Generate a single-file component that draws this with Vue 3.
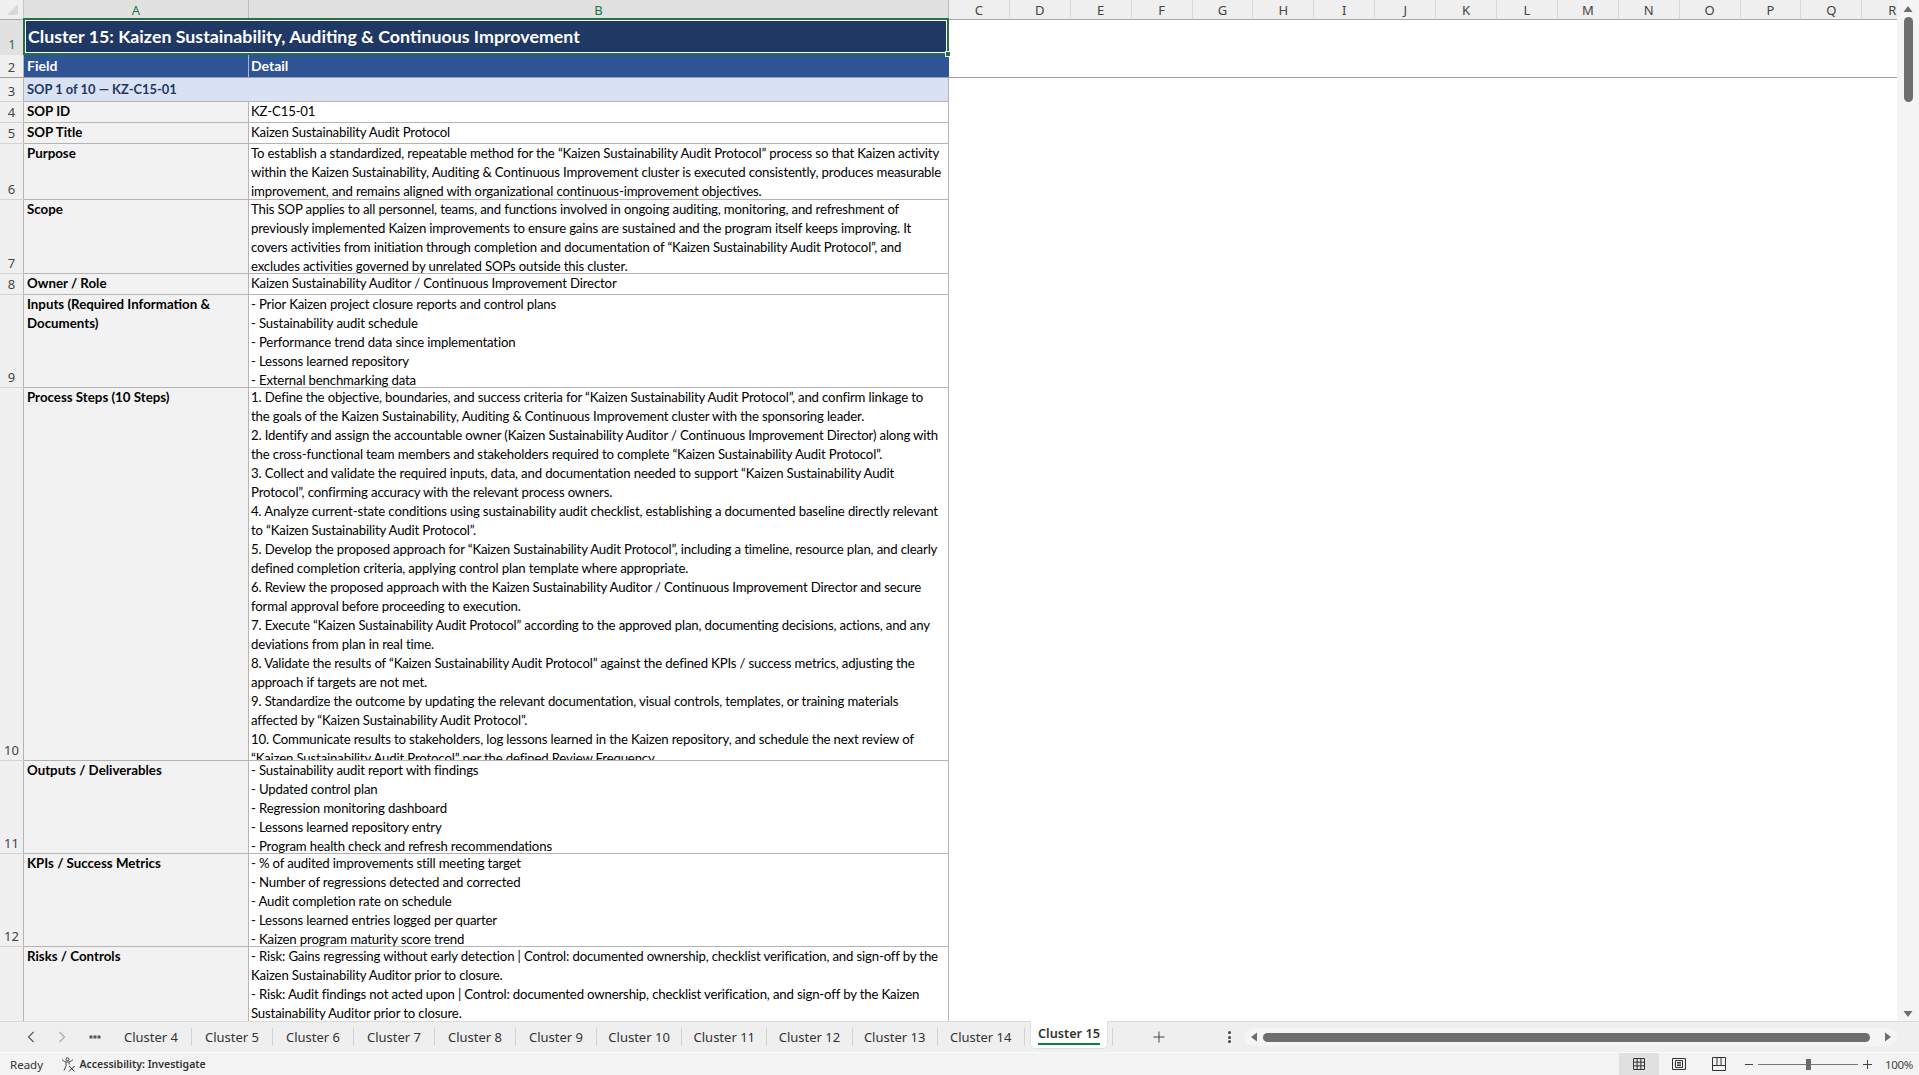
<script setup>
const otherCols = ['C','D','E','F','G','H','I','J','K','L','M','N','O','P','Q','R']
const q = 'Kaizen Sustainability Audit Protocol'
const rows = [
  { n: 4, h: 21, label: 'SOP ID', lines: ['KZ-C15-01'] },
  { n: 5, h: 21, label: 'SOP Title', lines: [q] },
  { n: 6, h: 56, label: 'Purpose', lines: [
    `To establish a standardized, repeatable method for the “${q}” process so that Kaizen activity`,
    'within the Kaizen Sustainability, Auditing & Continuous Improvement cluster is executed consistently, produces measurable',
    'improvement, and remains aligned with organizational continuous-improvement objectives.' ] },
  { n: 7, h: 74, label: 'Scope', lines: [
    'This SOP applies to all personnel, teams, and functions involved in ongoing auditing, monitoring, and refreshment of',
    'previously implemented Kaizen improvements to ensure gains are sustained and the program itself keeps improving. It',
    `covers activities from initiation through completion and documentation of “${q}”, and`,
    'excludes activities governed by unrelated SOPs outside this cluster.' ] },
  { n: 8, h: 21, label: 'Owner / Role', lines: ['Kaizen Sustainability Auditor / Continuous Improvement Director'] },
  { n: 9, h: 93, label: ['Inputs (Required Information &', 'Documents)'], lines: [
    '- Prior Kaizen project closure reports and control plans',
    '- Sustainability audit schedule',
    '- Performance trend data since implementation',
    '- Lessons learned repository',
    '- External benchmarking data' ] },
  { n: 10, h: 373, label: 'Process Steps (10 Steps)', lines: [
    `1. Define the objective, boundaries, and success criteria for “${q}”, and confirm linkage to`,
    'the goals of the Kaizen Sustainability, Auditing & Continuous Improvement cluster with the sponsoring leader.',
    '2. Identify and assign the accountable owner (Kaizen Sustainability Auditor / Continuous Improvement Director) along with',
    `the cross-functional team members and stakeholders required to complete “${q}”.`,
    '3. Collect and validate the required inputs, data, and documentation needed to support “Kaizen Sustainability Audit',
    'Protocol”, confirming accuracy with the relevant process owners.',
    '4. Analyze current-state conditions using sustainability audit checklist, establishing a documented baseline directly relevant',
    `to “${q}”.`,
    `5. Develop the proposed approach for “${q}”, including a timeline, resource plan, and clearly`,
    'defined completion criteria, applying control plan template where appropriate.',
    '6. Review the proposed approach with the Kaizen Sustainability Auditor / Continuous Improvement Director and secure',
    'formal approval before proceeding to execution.',
    `7. Execute “${q}” according to the approved plan, documenting decisions, actions, and any`,
    'deviations from plan in real time.',
    `8. Validate the results of “${q}” against the defined KPIs / success metrics, adjusting the`,
    'approach if targets are not met.',
    '9. Standardize the outcome by updating the relevant documentation, visual controls, templates, or training materials',
    `affected by “${q}”.`,
    '10. Communicate results to stakeholders, log lessons learned in the Kaizen repository, and schedule the next review of',
    `“${q}” per the defined Review Frequency.` ] },
  { n: 11, h: 93, label: 'Outputs / Deliverables', lines: [
    '- Sustainability audit report with findings',
    '- Updated control plan',
    '- Regression monitoring dashboard',
    '- Lessons learned repository entry',
    '- Program health check and refresh recommendations' ] },
  { n: 12, h: 93, label: 'KPIs / Success Metrics', lines: [
    '- % of audited improvements still meeting target',
    '- Number of regressions detected and corrected',
    '- Audit completion rate on schedule',
    '- Lessons learned entries logged per quarter',
    '- Kaizen program maturity score trend' ] },
  { n: 13, h: 190, label: 'Risks / Controls', lines: [
    '- Risk: Gains regressing without early detection | Control: documented ownership, checklist verification, and sign-off by the',
    'Kaizen Sustainability Auditor prior to closure.',
    '- Risk: Audit findings not acted upon | Control: documented ownership, checklist verification, and sign-off by the Kaizen',
    'Sustainability Auditor prior to closure.' ] },
]
const tabs = [
  { name: 'Cluster 4' }, { name: 'Cluster 5' }, { name: 'Cluster 6' }, { name: 'Cluster 7' }, { name: 'Cluster 8' }, { name: 'Cluster 9' },
  { name: 'Cluster 10', wide: true }, { name: 'Cluster 11', wide: true }, { name: 'Cluster 12', wide: true },
  { name: 'Cluster 13', wide: true }, { name: 'Cluster 14', last: true },
]
</script>

<template>
  <div class="app">
    <div class="main">
      <div class="sheet">
        <div class="colhead">
          <div class="corner">
            <svg width="14" height="14" viewBox="0 0 14 14"><path d="M12 1V12H1Z" fill="#d9d9d9" /></svg>
          </div>
          <div class="ch sel cha">A</div>
          <div class="ch sel chb">B</div>
          <div v-for="c in otherCols" :key="c" class="ch other">{{ c }}</div>
        </div>
        <div class="rows">
          <div class="row r1">
            <div class="rh active">1</div>
            <div class="title">Cluster 15: Kaizen Sustainability, Auditing &amp; Continuous Improvement</div>
          </div>
          <div class="row r2">
            <div class="rh">2</div>
            <div class="hd hda">Field</div>
            <div class="hd hdb">Detail</div>
          </div>
          <div class="row r3">
            <div class="rh">3</div>
            <div class="sop">SOP 1 of 10 — KZ-C15-01</div>
          </div>
          <div v-for="r in rows" :key="r.n" class="row" :style="{ height: r.h + 'px' }">
            <div class="rh">{{ r.n }}</div>
            <div class="cell label">
              <template v-if="Array.isArray(r.label)">
                <div v-for="l in r.label" :key="l" class="line">{{ l }}</div>
              </template>
              <div v-else class="line">{{ r.label }}</div>
            </div>
            <div class="cell detail">
              <div v-for="(l, i) in r.lines" :key="i" class="line">{{ l }}</div>
            </div>
          </div>
        </div>
        <div class="selection"><span class="handle"></span></div>
      </div>
      <div class="vscroll">
        <svg class="varrow" width="10" height="8" viewBox="0 0 10 8"><path d="M5 1L9.5 7H.5Z" fill="#6e6e6e" /></svg>
        <div class="vthumb"></div>
        <svg class="varrow down" width="10" height="8" viewBox="0 0 10 8"><path d="M5 7L9.5 1H.5Z" fill="#6e6e6e" /></svg>
      </div>
    </div>

    <div class="tabbar">
      <div class="nav">
        <svg width="8" height="12" viewBox="0 0 8 12"><path d="M6.5 1L1.5 6L6.5 11" fill="none" stroke="#555" stroke-width="1.1" /></svg>
        <svg width="8" height="12" viewBox="0 0 8 12"><path d="M1.5 1L6.5 6L1.5 11" fill="none" stroke="#aaa" stroke-width="1.1" /></svg>
        <svg width="12" height="4" viewBox="0 0 12 4"><g fill="#555"><rect x="0.5" y="0.5" width="3" height="3" /><rect x="4.5" y="0.5" width="3" height="3" /><rect x="8.5" y="0.5" width="3" height="3" /></g></svg>
      </div>
      <div v-for="t in tabs" :key="t.name" class="tab" :class="{ wide: t.wide, last: t.last }">{{ t.name }}</div>
      <div class="tab-active"><span>Cluster 15</span></div>
      <div class="addzone">
        <svg width="12" height="12" viewBox="0 0 12 12"><path d="M6 .5V11.500M.5 6H11.500" stroke="#444" stroke-width="1" fill="none" /></svg>
      </div>
      <div class="vdots"><i></i><i></i><i></i></div>
      <div class="hscroll">
        <svg width="8" height="10" viewBox="0 0 8 10"><path d="M1 5L7 .5V9.500Z" fill="#6e6e6e" /></svg>
        <div class="hthumb"></div>
        <svg width="8" height="10" viewBox="0 0 8 10"><path d="M7 5L1 .5V9.500Z" fill="#6e6e6e" /></svg>
      </div>
    </div>

    <div class="status">
      <span class="ready">Ready</span>
      <svg class="acc" width="15" height="15" viewBox="0 0 15 15" fill="none" stroke="#444" stroke-width="1">
        <circle cx="6.500" cy="2.300" r="1.500" />
        <path d="M1 2.500C3 4.500 4.500 5 6.500 5S10 4.500 12 2.500M4.800 5.200L5.200 8.500L3 13.500M8.200 5.200L8 7.500" />
        <path d="M8 9L13.500 14.500M13.500 9L8 14.500" stroke="#333" />
      </svg>
      <span class="acc-text">Accessibility: Investigate</span>
      <div class="views">
        <div class="view on">
          <svg width="14" height="14" viewBox="0 0 14 14" fill="none" stroke="#333"><path d="M1.500 1.500H12.500V12.500H1.500ZM1.500 5.170H12.500M1.500 8.830H12.500M5.170 1.500V12.500M8.830 1.500V12.500" /></svg>
        </div>
        <div class="view">
          <svg width="14" height="14" viewBox="0 0 14 14" fill="none" stroke="#333"><path d="M.5 1.500H13.500V12.500H.5ZM3.500 3.500H10.500V10.500H3.500ZM5 5.500H9M5 7H9M5 8.500H9" /></svg>
        </div>
        <div class="view">
          <svg width="14" height="14" viewBox="0 0 14 14" fill="none" stroke="#333"><path d="M.5 .5H13.500V13.500H.5ZM.5 8.500H13.500M5 .5V8.500M9 .5V8.500" /></svg>
        </div>
      </div>
      <div class="zoom">
        <span class="zm"></span>
        <div class="slider"><div class="knob"></div></div>
        <svg width="9" height="9" viewBox="0 0 9 9"><path d="M4.500 0V9M0 4.500H9" stroke="#444" fill="none" /></svg>
      </div>
      <span class="pct">100%</span>
    </div>
  </div>
</template>

<style>
html, body { margin: 0; padding: 0; overflow: hidden; background: #fff; }
</style>

<style scoped>
.app { width: 1919px; height: 1075px; display: flex; flex-direction: column; background: #fff; overflow: hidden; font-family: "Lato", "Liberation Sans", sans-serif; color: #000; }
.main { height: 1021px; display: flex; flex: none; }
.sheet { width: 1897px; flex: none; position: relative; display: flex; flex-direction: column; overflow: hidden; }
.colhead { height: 20px; flex: none; display: flex; overflow: hidden; }
.corner { width: 24px; height: 20px; flex: none; box-sizing: border-box; background: #f0f0f0; border-right: 1px solid #c8c8c8; border-bottom: 1px solid #a8a8a8; display: flex; align-items: center; justify-content: center; padding: 0 0 0 3px; }
.ch { box-sizing: border-box; flex: none; height: 20px; display: flex; align-items: center; justify-content: center; font: 13px "Noto Sans", sans-serif; padding-top: 1px; }
.sel { background: #e1e1e1; color: #217346; border-right: 1px solid #bcbcbc; border-bottom: 1px solid #217346; }
.cha { width: 225px; }
.chb { width: 700px; }
.other { width: 60.900px; background: #efefef; color: #444; border-right: 1px solid #d8d8d8; border-bottom: 1px solid #a8a8a8; }
.rows { flex: 1; overflow: hidden; display: flex; flex-direction: column; }
.row { display: flex; flex: none; box-sizing: border-box; }
.rh { width: 24px; flex: none; box-sizing: border-box; background: #f0f0f0; color: #444; font: 13px/15px "Noto Sans", sans-serif; text-align: center; border-right: 1px solid #b4b4b4; border-bottom: 1px solid #d4d4d4; display: flex; align-items: flex-end; justify-content: center; padding-bottom: 2px; }
.rh.active { color: #217346; background: #e1e1e1; border-right: 0; border-bottom: 0; padding-bottom: 3px; }
.r1 { height: 35px; }
.title { width: 925px; flex: none; box-sizing: border-box; background: #203864; color: #fff; font-weight: 700; font-size: 17.800px; line-height: 33px; padding: 0 0 0 4px; white-space: nowrap; }
.r2 { height: 23px; border-bottom: 1px solid #9e9e9e; }
.r2 .rh { border-bottom: 0; }
.hd { flex: none; box-sizing: border-box; background: #2f5496; color: #fff; font-weight: 700; font-size: 14px; line-height: 22px; padding-left: 3px; white-space: nowrap; }
.hda { width: 225px; border-right: 1px solid #a9b6cf; }
.hdb { width: 700px; padding-left: 2px; }
.r3 { height: 24px; }
.sop { width: 925px; flex: none; box-sizing: border-box; background: #d9e2f3; color: #1f3864; font-weight: 700; font-size: 12.900px; line-height: 23px; padding-left: 3px; border-bottom: 1px solid #b4b4b4; border-right: 1px solid #b4b4b4; white-space: nowrap; }
.cell { flex: none; box-sizing: border-box; padding: 0 0 0 3px; border-right: 1px solid #b4b4b4; border-bottom: 1px solid #b4b4b4; overflow: hidden; font-size: 13.200px; }
.label { width: 225px; background: #f2f2f2; font-weight: 700; font-size: 13.300px; }
.detail { width: 700px; background: #fff; letter-spacing: -.16px; padding-left: 2px; }
.line { line-height: 19px; height: 19px; white-space: nowrap; }
.selection { position: absolute; left: 23px; top: 18px; width: 926px; height: 37px; box-sizing: border-box; border: 2px solid #217346; box-shadow: inset 0 0 0 1px #fff; pointer-events: none; }
.handle { position: absolute; right: -4px; bottom: -4px; width: 4px; height: 4px; background: #217346; border: 1px solid #fff; }
.vscroll { width: 22px; flex: none; background: #f4f4f4; display: flex; flex-direction: column; align-items: center; position: relative; }
.varrow { margin-top: 5px; flex: none; }
.vthumb { width: 9px; height: 85px; margin-top: 4px; background: #6e6e6e; border-radius: 4.500px; }
.varrow.down { margin-top: auto; margin-bottom: 3px; }
.tabbar { height: 32px; flex: none; box-sizing: border-box; background: #efefef; border-top: 1px solid #d9d9d9; border-bottom: 1px solid #fafafa; display: flex; align-items: flex-start; }
.nav { width: 111px; height: 30px; flex: none; box-sizing: border-box; display: flex; align-items: center; padding: 0 0 0 27px; gap: 23px; }
.tab { width: 81px; height: 18px; margin-top: 6px; flex: none; box-sizing: border-box; border-right: 1px solid #d2d2d2; font: 13px/18px "Noto Sans", sans-serif; color: #333; text-align: center; }
.tab.wide { width: 85.200px; }
.tab.last { width: 87px; }
.tab-active { width: 78px; height: 28px; margin-left: 5.200px; margin-top: -1px; flex: none; box-sizing: border-box; background: #fff; border-radius: 0 0 5px 5px; border: 1px solid #e0e0e0; border-top: 0; display: flex; justify-content: center; }
.tab-active span { height: 24px; box-sizing: border-box; font: 600 12.700px/25px "Noto Sans", sans-serif; color: #333; border-bottom: 2px solid #107c41; }
.addzone { width: 116.500px; height: 18px; margin-top: 6px; flex: none; box-sizing: border-box; margin-left: 4px; border-left: 1px solid #d2d2d2; display: flex; align-items: center; justify-content: center; padding-right: 23.500px; }
.vdots { width: 3px; height: 12px; margin-top: 9px; flex: none; display: flex; flex-direction: column; justify-content: space-between; }
.vdots i { display: block; width: 3px; height: 3px; background: #444; border-radius: 50%; }
.hscroll { width: 652.300px; height: 18px; margin-top: 6px; margin-left: 13.300px; flex: none; box-sizing: border-box; background: #f5f5f5; border-radius: 9px; display: flex; align-items: center; padding: 0 5px; }
.hthumb { width: 607px; height: 9px; margin: 0 auto 0 5.400px; background: #6e6e6e; border-radius: 4.500px; }
.status { height: 22px; flex: none; background: #f3f3f3; display: flex; align-items: center; font: 11.500px "Noto Sans", sans-serif; color: #333; }
.ready { margin-left: 10px; width: 51px; flex: none; }
.acc { flex: none; }
.acc-text { margin-left: 3.500px; font-weight: 600; font-size: 10.500px; color: #333; }
.views { margin-left: auto; display: flex; height: 22px; }
.view { width: 40px; height: 22px; display: flex; align-items: center; justify-content: center; }
.view.on { background: #e0e0e0; }
.zoom { display: flex; align-items: center; margin-left: 6px; }
.zm { width: 8px; height: 1px; background: #444; }
.slider { width: 100px; height: 1px; margin: 0 5px; background: #777; position: relative; }
.knob { position: absolute; left: 48px; top: -5px; width: 5px; height: 11px; background: #6a6a6a; }
.pct { margin: 0 8px 0 13px; width: 26px; flex: none; letter-spacing: -.3px; color: #444; }
</style>
